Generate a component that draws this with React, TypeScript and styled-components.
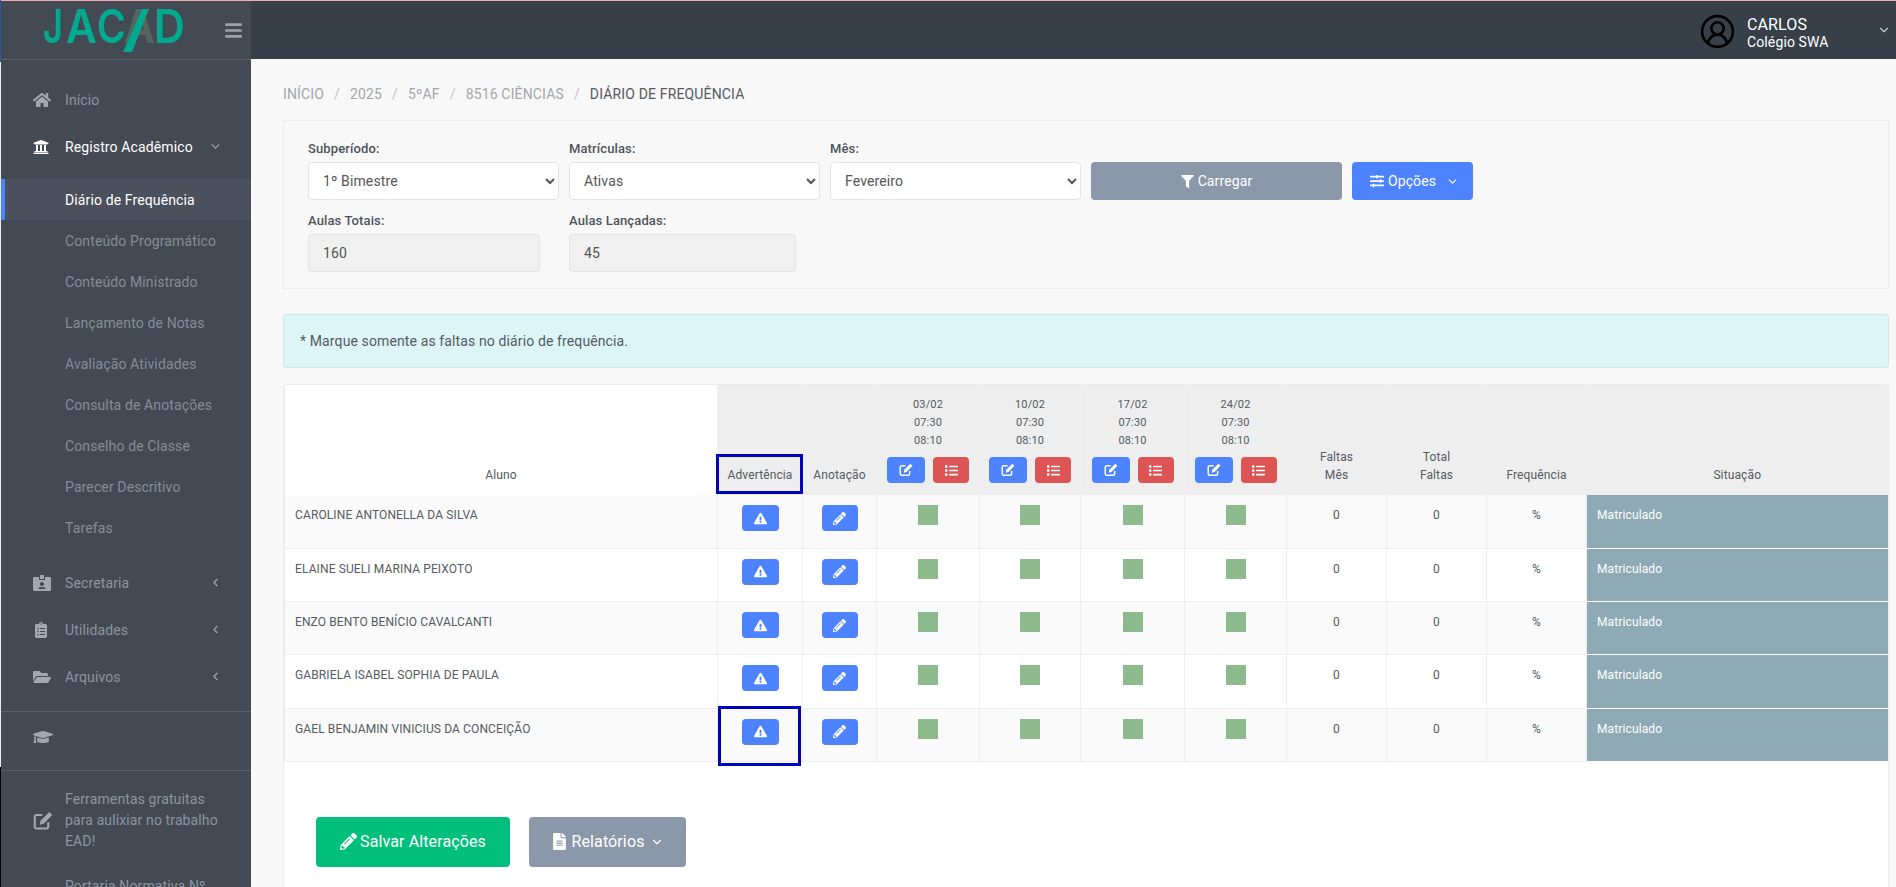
import React from "react";
import styled, { createGlobalStyle } from "styled-components";
import {
  FaHome, FaUniversity, FaIdCardAlt, FaClipboardList, FaFolderOpen, FaGraduationCap,
  FaBars, FaFilter, FaSlidersH, FaExclamationTriangle, FaPencilAlt, FaList, FaFileAlt,
} from "react-icons/fa";
import { ChevronDown, ChevronLeft, CircleUserRound } from "lucide-react";

const Global = createGlobalStyle`
  html, body { margin: 0; padding: 0; height: 887px; overflow: hidden; background: #f8f8f8; }
  body, select, input, button { font-family: Roboto, "Liberation Sans", sans-serif; letter-spacing: 0.12px; }
  * { box-sizing: border-box; }
`;

const Shell = styled.div`display: flex; height: 887px; overflow: hidden;`;
const EdgeStrip = styled.div`
  width: 1px; flex: none;
  background: linear-gradient(#2b57a7 0 62px, #e8eef0 62px 767px, #000 767px);
`;
const Column = styled.div`flex: 1; display: flex; flex-direction: column; min-width: 0; border-top: 1px solid #f4a9b4;`;
const TopBar = styled.header`display: flex; height: 58px; flex: none; background: #373f48;`;
const Brand = styled.div`
  width: 250px; height: 59px; background: #434a54; border-bottom: 1px solid #5a616b;
  display: flex; align-items: center; justify-content: space-between; padding: 0 8px 0 43px;
  color: #9aa3ad; position: relative; z-index: 1;
`;
const LogoMark = styled.svg`display: block; width: 145px; height: 46px; margin-top: 3px; overflow: visible;`;
const LogoText = styled.text`font-family: Inter, Roboto, sans-serif; font-size: 47px; font-weight: 600; fill: #00a98f; letter-spacing: 0;`;
const LogoDim = styled(LogoText)`fill: #56645f;`;
const UserArea = styled.div`flex: 1; display: flex; align-items: center; justify-content: flex-end; color: #fff; padding-right: 5px;`;
const UserIcon = styled.div`color: #000; margin: 2px 11px 0 0; display: flex;`;
const UserText = styled.div`width: 130px; display: flex; flex-direction: column; margin-top: 6px;`;
const UserName = styled.span`font-size: 16px; line-height: 18px;`;
const UserSchool = styled.span`font-size: 14px; line-height: 16px;`;
const UserCaret = styled.div`display: flex; color: #c6cbd0;`;

const Body = styled.div`flex: 1; display: flex; min-height: 0;`;
const Sidebar = styled.nav`width: 250px; flex: none; background: #434a54; padding-top: 17px; overflow: hidden;`;
const MenuItem = styled.div<{ $active?: boolean }>`
  height: 47px; display: flex; align-items: center; padding-left: 32px; padding-right: 29px;
  font-size: 14px; color: ${(p) => (p.$active ? "#fff" : "#8b95a0")};
`;
const MenuIcon = styled.span<{ $active?: boolean }>`
  width: 32px; flex: none; display: flex; align-items: center; font-size: 18px;
  color: ${(p) => (p.$active ? "#fff" : "#a0a9b2")};
`;
const MenuLabel = styled.span`flex: 1;`;
const MenuCaret = styled.span`display: flex; color: #a0a9b2;`;
const SubList = styled.div`padding: 9px 0 11px;`;
const SubItem = styled.div<{ $active?: boolean }>`
  height: 41px; display: flex; align-items: center; padding-left: ${(p) => (p.$active ? 60 : 64)}px;
  font-size: 14px; color: ${(p) => (p.$active ? "#fff" : "#838d98")};
  background: ${(p) => (p.$active ? "#4a515c" : "transparent")};
  border-left: ${(p) => (p.$active ? "4px solid #4d83ff" : "none")};
`;
const SideDivider = styled.div`height: 1px; background: #5a616b; margin-top: 11px;`;
const IconBlock = styled.div`
  height: 59px; display: flex; align-items: center; padding: 0 0 8px 32px; font-size: 20px; color: #a0a9b2;
  border-bottom: 1px solid #5a616b; margin-bottom: 6px;
`;
const LinkItem = styled.div`
  display: flex; align-items: center; padding: 12px 20px; padding-left: 32px; font-size: 14px; line-height: 21px; color: #8b95a0;
`;

const Main = styled.main`flex: 1; min-width: 0; display: flex; flex-direction: column; padding: 0 7px 0 32px; background: #f8f8f8;`;
const Crumbs = styled.div`height: 61px; flex: none; display: flex; align-items: center; font-size: 14px; color: #a3a7ab; padding-top: 8px; letter-spacing: 0.15px;`;
const Crumb = styled.span<{ $current?: boolean }>`color: ${(p) => (p.$current ? "#555b61" : "#a3a7ab")};`;
const CrumbSep = styled.span`margin: 0 10px; color: #c0c3c6;`;

const FilterCard = styled.section`
  height: 169px; flex: none; border: 1px solid #ececec; padding: 20px 24px 0;
  display: flex; flex-direction: column; gap: 13px;
`;
const FilterRow = styled.div`display: flex; align-items: flex-end; gap: 10px;`;
const Field = styled.div<{ $w: number; $mr?: number }>`
  width: ${(p) => p.$w}px; margin-right: ${(p) => p.$mr ?? 0}px; display: flex; flex-direction: column; gap: 5px;
`;
const Label = styled.label`font-size: 13px; font-weight: 500; line-height: 16px; color: #4e545a;`;
const Select = styled.select`
  height: 38px; width: 100%; border: 1px solid #e3e3e3; border-radius: 4px; background-color: #fff;
  font-size: 14px; color: #555; padding: 0 10px;
`;
const ReadOnly = styled.input`
  height: 38px; width: 100%; border: 1px solid #e3e3e3; border-radius: 4px; background: #f0f0f0;
  font-size: 14px; color: #555; padding: 0 14px;
`;
const ActionButton = styled.button<{ $bg: string; $w: number }>`
  width: ${(p) => p.$w}px; height: 38px; border: none; border-radius: 4px; background: ${(p) => p.$bg};
  color: #fff; font-size: 14px; display: inline-flex; align-items: center; justify-content: center; gap: 4px;
`;
const OptionsButton = styled(ActionButton)`padding-left: 10px;`;
const TrailingCaret = styled.span<{ $gap: number }>`display: flex; margin-left: ${(p) => p.$gap}px;`;
const Alert = styled.div`
  height: 54px; flex: none; margin-top: 25px; padding: 0 16px; display: flex; align-items: center;
  background: #ddf5f7; border: 1px solid #cfe8ea; border-radius: 3px; color: #555b61; font-size: 14px;
`;

const TableCard = styled.section`
  flex: 1; margin-top: 16px; background: #fff; border: 1px solid #ececec; border-bottom: none;
  border-radius: 3px 3px 0 0; padding-right: 1px;
`;
const Table = styled.table`width: 1603px; table-layout: fixed; border-collapse: collapse; font-size: 12px; color: #555b61;`;
const HeadCell = styled.th<{ $plain?: boolean }>`
  position: relative; height: 110px; padding: 0 0 11px; vertical-align: bottom; font-weight: 400; line-height: 18px;
  text-align: center; background: ${(p) => (p.$plain ? "#fff" : "#eeeeee")};
  border-left: 1px solid #f0f0f0;
`;
const DateLine = styled.div`font-size: 11px; line-height: 18px;`;
const HeadActions = styled.div`display: flex; justify-content: center; gap: 8px; margin: 7px 0 1px;`;
const Row = styled.tr<{ $odd: boolean }>`background: ${(p) => (p.$odd ? "#fafafa" : "#fff")}; height: 53.3px;`;
const Cell = styled.td<{ $left?: boolean; $text?: boolean }>`
  position: relative; padding: ${(p) => (p.$text ? 11 : 10)}px 0 0; vertical-align: top; line-height: 18px; height: 53.3px;
  text-align: ${(p) => (p.$left ? "left" : "center")}; padding-left: ${(p) => (p.$left ? 10 : 0)}px;
  border: 1px solid #eeeeee; border-top: none;
`;
const StatusCell = styled.td`
  background: #8eaab5; color: #fff; padding: 11px 0 0 10px; vertical-align: top; line-height: 18px;
  border-bottom: 1px solid #fff;
`;
const IconButton = styled.button<{ $bg: string; $w: number }>`
  width: ${(p) => p.$w}px; height: 26px; border: none; border-radius: 4px; padding: 0;
  background: ${(p) => p.$bg}; color: #fff; display: inline-flex; align-items: center; justify-content: center;
  font-size: 13px; vertical-align: top;
`;
const Mark = styled.span`display: inline-block; width: 20px; height: 20px; background: #8dbb8d; vertical-align: top;`;
const HighlightHead = styled.span`
  position: absolute; left: -2px; right: -1px; bottom: 1px; height: 40px; border: 3px solid #0000bf;
`;
const HighlightCell = styled.span`
  position: absolute; left: 0; right: 1px; top: -3px; bottom: -5px; border: 3px solid #0000bf;
`;
const Footer = styled.div`display: flex; gap: 19px; padding: 55px 0 0 32px;`;
const BigButton = styled.button<{ $bg: string; $w: number }>`
  width: ${(p) => p.$w}px; height: 50px; border: none; border-radius: 4px; background: ${(p) => p.$bg};
  color: #fff; font-size: 16px; display: inline-flex; align-items: center; justify-content: center; gap: 3px;
`;

const EditIcon = ({ size }: { size: number }) => (
  <svg width={size} height={size} viewBox="0 0 16 16" fill="none" aria-hidden="true">
    <path d="M7.5 3.2H3a1.6 1.6 0 0 0-1.6 1.6v7.6A1.6 1.6 0 0 0 3 14h7.6a1.6 1.6 0 0 0 1.6-1.6V9" stroke="currentColor" strokeWidth="1.7" />
    <path d="M13 .8 15.4 3.2 8.6 10.2 5.4 11 6 7.7Z" fill="currentColor" />
  </svg>
);

const sub = ["Diário de Frequência", "Conteúdo Programático", "Conteúdo Ministrado", "Lançamento de Notas", "Avaliação Atividades", "Consulta de Anotações", "Conselho de Classe", "Parecer Descritivo", "Tarefas"];
const students = ["CAROLINE ANTONELLA DA SILVA", "ELAINE SUELI MARINA PEIXOTO", "ENZO BENTO BENÍCIO CAVALCANTI", "GABRIELA ISABEL SOPHIA DE PAULA", "GAEL BENJAMIN VINICIUS DA CONCEIÇÃO"];
const dates = [
  { d: "03/02", w: 103 }, { d: "10/02", w: 101 }, { d: "17/02", w: 104 }, { d: "24/02", w: 102 },
];
const BLUE = "#4d83ff";
const RED = "#dc5454";
const GREY = "#8a98aa";

export default function App() {
  return (
    <Shell>
      <Global />
      <EdgeStrip />
      <Column>
        <TopBar>
          <Brand>
            <LogoMark viewBox="0 0 145 46">
              <LogoText x="-1" y="34" textLength="20" lengthAdjust="spacingAndGlyphs">J</LogoText>
              <LogoText x="22" y="34" textLength="31" lengthAdjust="spacingAndGlyphs">A</LogoText>
              <LogoText x="53" y="34" textLength="29" lengthAdjust="spacingAndGlyphs">C</LogoText>
              <LogoDim x="80" y="34" textLength="31" lengthAdjust="spacingAndGlyphs">A</LogoDim>
              <polygon points="79,43 88,43 105,0 98,0" fill="#00a98f" />
              <LogoText x="110" y="34" textLength="31" lengthAdjust="spacingAndGlyphs">D</LogoText>
            </LogoMark>
            <FaBars size={19} />
          </Brand>
          <UserArea>
            <UserIcon><CircleUserRound size={37} strokeWidth={1.7} /></UserIcon>
            <UserText>
              <UserName>CARLOS</UserName>
              <UserSchool>Colégio SWA</UserSchool>
            </UserText>
            <UserCaret><ChevronDown size={14} /></UserCaret>
          </UserArea>
        </TopBar>
        <Body>
          <Sidebar>
            <MenuItem><MenuIcon><FaHome /></MenuIcon><MenuLabel>Início</MenuLabel></MenuItem>
            <MenuItem $active><MenuIcon $active><FaUniversity size={16} /></MenuIcon><MenuLabel>Registro Acadêmico</MenuLabel><MenuCaret><ChevronDown size={13} /></MenuCaret></MenuItem>
            <SubList>
              {sub.map((s, i) => <SubItem key={s} $active={i === 0}>{s}</SubItem>)}
            </SubList>
            <MenuItem><MenuIcon><FaIdCardAlt /></MenuIcon><MenuLabel>Secretaria</MenuLabel><MenuCaret><ChevronLeft size={13} /></MenuCaret></MenuItem>
            <MenuItem><MenuIcon><FaClipboardList size={16} /></MenuIcon><MenuLabel>Utilidades</MenuLabel><MenuCaret><ChevronLeft size={13} /></MenuCaret></MenuItem>
            <MenuItem><MenuIcon><FaFolderOpen /></MenuIcon><MenuLabel>Arquivos</MenuLabel><MenuCaret><ChevronLeft size={13} /></MenuCaret></MenuItem>
            <SideDivider />
            <IconBlock><FaGraduationCap /></IconBlock>
            <LinkItem>
              <MenuIcon><EditIcon size={20} /></MenuIcon>
              <span>Ferramentas gratuitas<br />para aulixiar no trabalho<br />EAD!</span>
            </LinkItem>
            <LinkItem>
              <MenuIcon />
              <span>Portaria Normativa Nº</span>
            </LinkItem>
          </Sidebar>
          <Main>
            <Crumbs>
              <Crumb>INÍCIO</Crumb><CrumbSep>/</CrumbSep>
              <Crumb>2025</Crumb><CrumbSep>/</CrumbSep>
              <Crumb>5ºAF</Crumb><CrumbSep>/</CrumbSep>
              <Crumb>8516 CIÊNCIAS</Crumb><CrumbSep>/</CrumbSep>
              <Crumb $current>DIÁRIO DE FREQUÊNCIA</Crumb>
            </Crumbs>
            <FilterCard>
              <FilterRow>
                <Field $w={251}><Label>Subperíodo:</Label><Select defaultValue="1"><option value="1">1º Bimestre</option></Select></Field>
                <Field $w={251}><Label>Matrículas:</Label><Select defaultValue="a"><option value="a">Ativas</option></Select></Field>
                <Field $w={251}><Label>Mês:</Label><Select defaultValue="f"><option value="f">Fevereiro</option></Select></Field>
                <ActionButton $bg={GREY} $w={251}><FaFilter size={13} /> Carregar</ActionButton>
                <OptionsButton $bg={BLUE} $w={121}><FaSlidersH size={14} /> Opções <TrailingCaret $gap={6}><ChevronDown size={13} /></TrailingCaret></OptionsButton>
              </FilterRow>
              <FilterRow>
                <Field $w={232} $mr={19}><Label>Aulas Totais:</Label><ReadOnly readOnly value="160" /></Field>
                <Field $w={227}><Label>Aulas Lançadas:</Label><ReadOnly readOnly value="45" /></Field>
              </FilterRow>
            </FilterCard>
            <Alert>* Marque somente as faltas no diário de frequência.</Alert>
            <TableCard>
              <Table>
                <colgroup>
                  <col width={433} /><col width={85} /><col width={74} />
                  {dates.map((d) => <col key={d.d} width={d.w} />)}
                  <col width={100} /><col width={100} /><col width={100} /><col width={301} />
                </colgroup>
                <thead>
                  <tr>
                    <HeadCell $plain>Aluno</HeadCell>
                    <HeadCell>Advertência<HighlightHead /></HeadCell>
                    <HeadCell>Anotação</HeadCell>
                    {dates.map((d) => (
                      <HeadCell key={d.d}>
                        <DateLine>{d.d}</DateLine>
                        <DateLine>07:30</DateLine>
                        <DateLine>08:10</DateLine>
                        <HeadActions>
                          <IconButton $bg={BLUE} $w={38}><EditIcon size={14} /></IconButton>
                          <IconButton $bg={RED} $w={36}><FaList /></IconButton>
                        </HeadActions>
                      </HeadCell>
                    ))}
                    <HeadCell>Faltas<br />Mês</HeadCell>
                    <HeadCell>Total<br />Faltas</HeadCell>
                    <HeadCell>Frequência</HeadCell>
                    <HeadCell>Situação</HeadCell>
                  </tr>
                </thead>
                <tbody>
                  {students.map((s, i) => (
                    <Row key={s} $odd={i % 2 === 0}>
                      <Cell $left $text>{s}</Cell>
                      <Cell>
                        <IconButton $bg={BLUE} $w={37}><FaExclamationTriangle /></IconButton>
                        {i === 4 && <HighlightCell />}
                      </Cell>
                      <Cell><IconButton $bg={BLUE} $w={36}><FaPencilAlt /></IconButton></Cell>
                      {dates.map((d) => <Cell key={d.d}><Mark /></Cell>)}
                      <Cell $text>0</Cell>
                      <Cell $text>0</Cell>
                      <Cell $text>%</Cell>
                      <StatusCell>Matriculado</StatusCell>
                    </Row>
                  ))}
                </tbody>
              </Table>
              <Footer>
                <BigButton $bg="#02bf7c" $w={194}><FaPencilAlt size={17} /> Salvar Alterações</BigButton>
                <BigButton $bg={GREY} $w={157}><FaFileAlt size={17} /> Relatórios <TrailingCaret $gap={2}><ChevronDown size={14} /></TrailingCaret></BigButton>
              </Footer>
            </TableCard>
          </Main>
        </Body>
      </Column>
    </Shell>
  );
}
